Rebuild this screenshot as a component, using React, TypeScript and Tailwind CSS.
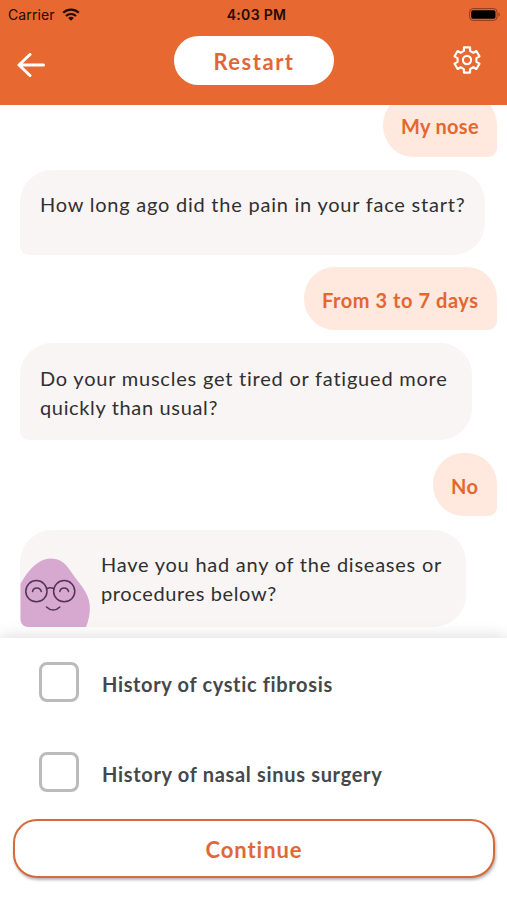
import React from 'react';

interface BubbleProps {
  lines: { text: string; tracking: string }[];
  className?: string;
}

const QuestionBubble: React.FC<BubbleProps> = ({ lines, className = '' }) => (
  <div className={`rounded-[32px] rounded-bl-[9px] bg-[#f9f5f4] text-[20px] leading-[29px] text-[#303030] ${className}`}>
    {lines.map((line) => (
      <p key={line.text} className={`whitespace-nowrap ${line.tracking}`}>{line.text}</p>
    ))}
  </div>
);

const AnswerBubble: React.FC<{ text: string; className?: string }> = ({ text, className = '' }) => (
  <div className={`flex h-[63px] shrink-0 items-center self-end whitespace-nowrap rounded-[31px] rounded-br-[9px] bg-[#ffe8de] pl-[18px] pt-[2px] text-[20px] font-bold text-[#e3672f] ${className}`}>
    {text}
  </div>
);

const Avatar = () => (
  <svg className="h-[70px] w-[70px] shrink-0" viewBox="0 0 70 70" fill="none">
    <path d="M.5 27C8 13 19 1.500 30.500 1.500c9 0 15 4.500 20 12.500 5 7.500 11 14 15 21 6 10.500 5.500 22 .5 35H9c-5.500 0-8.500-3-8.500-8.500z" fill="#d7a8d0" />
    <g stroke="#533459" strokeWidth="1.5" strokeLinecap="round">
      <circle cx="16.400" cy="34.200" r="10.600" />
      <circle cx="44.200" cy="34.200" r="10.600" />
      <path d="M27 31.500q3.300-1.500 6.600 0" />
      <path d="M12.500 34.500c1-4.800 7.500-4.800 8.800 0M39.800 34.500c1-4.800 7.500-4.800 8.800 0" />
      <path d="M26.500 50c4 4 9.500 4 13.300 0" />
    </g>
  </svg>
);

const StatusBar = () => (
  <div className="flex h-7 items-center justify-between pl-2 pr-[6px] text-[14px] text-[#210c03]">
    <div className="flex w-[160px] items-center gap-[7px] font-['Inter',sans-serif]">
      <span className="tracking-[0.1px]">Carrier</span>
      <svg className="h-[13px] w-[18px]" viewBox="0 0 18 13" fill="none" stroke="currentColor" strokeWidth="2.200">
        <path d="M1.200 4.800a11.300 11.300 0 0 1 15.600 0" />
        <path d="M4 8a7.200 7.200 0 0 1 10 0" />
        <path d="M6.200 10.100a4 4 0 0 1 5.600 0L9 12.800z" fill="currentColor" stroke="none" />
      </svg>
    </div>
    <span className="pl-1 font-['Inter',sans-serif] font-semibold tracking-[0.3px]">4:03 PM</span>
    <div className="flex w-[160px] justify-end">
      <svg className="h-[13px] w-[32px]" viewBox="0 0 32 13" fill="none">
        <rect x=".6" y=".6" width="27.500" height="11.800" rx="3.500" stroke="#8f3c18" strokeWidth="1" />
        <rect x="2.200" y="2.200" width="24.300" height="8.600" rx="1.800" fill="#000" />
        <path d="M29.500 4.500c1.800.8 1.800 3.200 0 4z" fill="#8f3c18" />
      </svg>
    </div>
  </div>
);

const Header = () => (
  <header className="relative z-10 h-[104.500px] shrink-0 bg-[#e76830]">
    <StatusBar />
    <div className="flex items-start pl-[17px] pt-2">
      <button className="mt-[17px] w-[29px]" aria-label="Back">
        <svg className="h-6 w-[29px]" viewBox="0 0 29 24" fill="none" stroke="#fff" strokeWidth="3" strokeLinecap="round" strokeLinejoin="round">
          <path d="M26.500 12H2M13 1.500 2 12l11 10.500" />
        </svg>
      </button>
      <button className="ml-[128px] h-[49px] w-[160px] rounded-full bg-white pt-[1px] text-[22px] font-bold tracking-[1.500px] text-[#e0673a]">
        Restart
      </button>
      <button className="ml-[119px] mt-[10px]" aria-label="Settings">
        <svg className="h-[28px] w-[28px]" viewBox="0 0 28 28" fill="none" stroke="#fff" strokeWidth="2.100" strokeLinejoin="round">
          <path d="M10.900 1.400H17.100V4.900L20.300 6.750 23.350 5 26.500 10.400 23.400 12.200V15.800L26.500 17.600 23.350 23 20.300 21.250 17.100 23.100V26.600H10.900V23.100L7.700 21.250 4.650 23 1.500 17.600 4.600 15.800V12.200L1.500 10.400 4.650 5 7.700 6.750 10.900 4.900z" />
          <circle cx="14" cy="14" r="4.100" />
        </svg>
      </button>
    </div>
  </header>
);

const options = [
  { label: 'History of cystic fibrosis', tracking: 'tracking-[0.650px]' },
  { label: 'History of nasal sinus surgery', tracking: 'tracking-[0.680px]' },
];

export default function App() {
  return (
    <div className="flex h-[900px] w-[507px] flex-col overflow-hidden bg-white font-['Lato',sans-serif]">
      <Header />

      <main className="flex h-[533.500px] shrink-0 flex-col items-start overflow-hidden pl-[20px] pr-[10px]">
        <AnswerBubble text="My nose" className="-mt-[11px] w-[114px] tracking-[0.300px]" />
        <QuestionBubble
          className="mt-[13.500px] h-[85px] w-[465px] shrink-0 pl-5 pt-[20px]"
          lines={[{ text: 'How long ago did the pain in your face start?', tracking: 'tracking-[0.770px]' }]}
        />
        <AnswerBubble text="From 3 to 7 days" className="mt-[12px] w-[193px] tracking-[0.550px]" />
        <QuestionBubble
          className="mt-[13px] h-[97px] w-[452px] shrink-0 pl-5 pt-[21px]"
          lines={[
            { text: 'Do your muscles get tired or fatigued more', tracking: 'tracking-[0.780px]' },
            { text: 'quickly than usual?', tracking: 'tracking-[0.650px]' },
          ]}
        />
        <AnswerBubble text="No" className="mt-[13px] w-[64px] tracking-[0.300px]" />
        <div className="mt-[13.500px] flex h-[97px] w-[446px] shrink-0 items-end gap-[11px] rounded-[32px] rounded-bl-[9px] bg-[#f9f5f4]">
          <Avatar />
          <QuestionBubble
            className="h-[77px]"
            lines={[
              { text: 'Have you had any of the diseases or', tracking: 'tracking-[0.760px]' },
              { text: 'procedures below?', tracking: 'tracking-[0.620px]' },
            ]}
          />
        </div>
      </main>

      <section className="relative flex grow flex-col bg-white shadow-[0_-2px_14px_rgba(0,0,0,0.13)]">
        <div className="flex flex-col gap-[50px] pl-[39px] pt-[24px]">
          {options.map((option) => (
            <label key={option.label} className="flex items-center gap-[23px] text-[20px] font-bold text-[#45484b]">
              <span className="h-[40px] w-[40px] rounded-[8px] border-[3px] border-[#bbb]" />
              <span className={`pt-[4px] ${option.tracking}`}>{option.label}</span>
            </label>
          ))}
        </div>
        <button className="ml-[13px] mt-[27px] h-[59px] w-[482px] rounded-[24px] border-[2.500px] border-[#d9683b] bg-white pt-[2px] text-[22px] font-bold tracking-[0.950px] text-[#e0673a] shadow-[1px_2px_3px_rgba(0,0,0,0.3)]">
          Continue
        </button>
      </section>
    </div>
  );
}
